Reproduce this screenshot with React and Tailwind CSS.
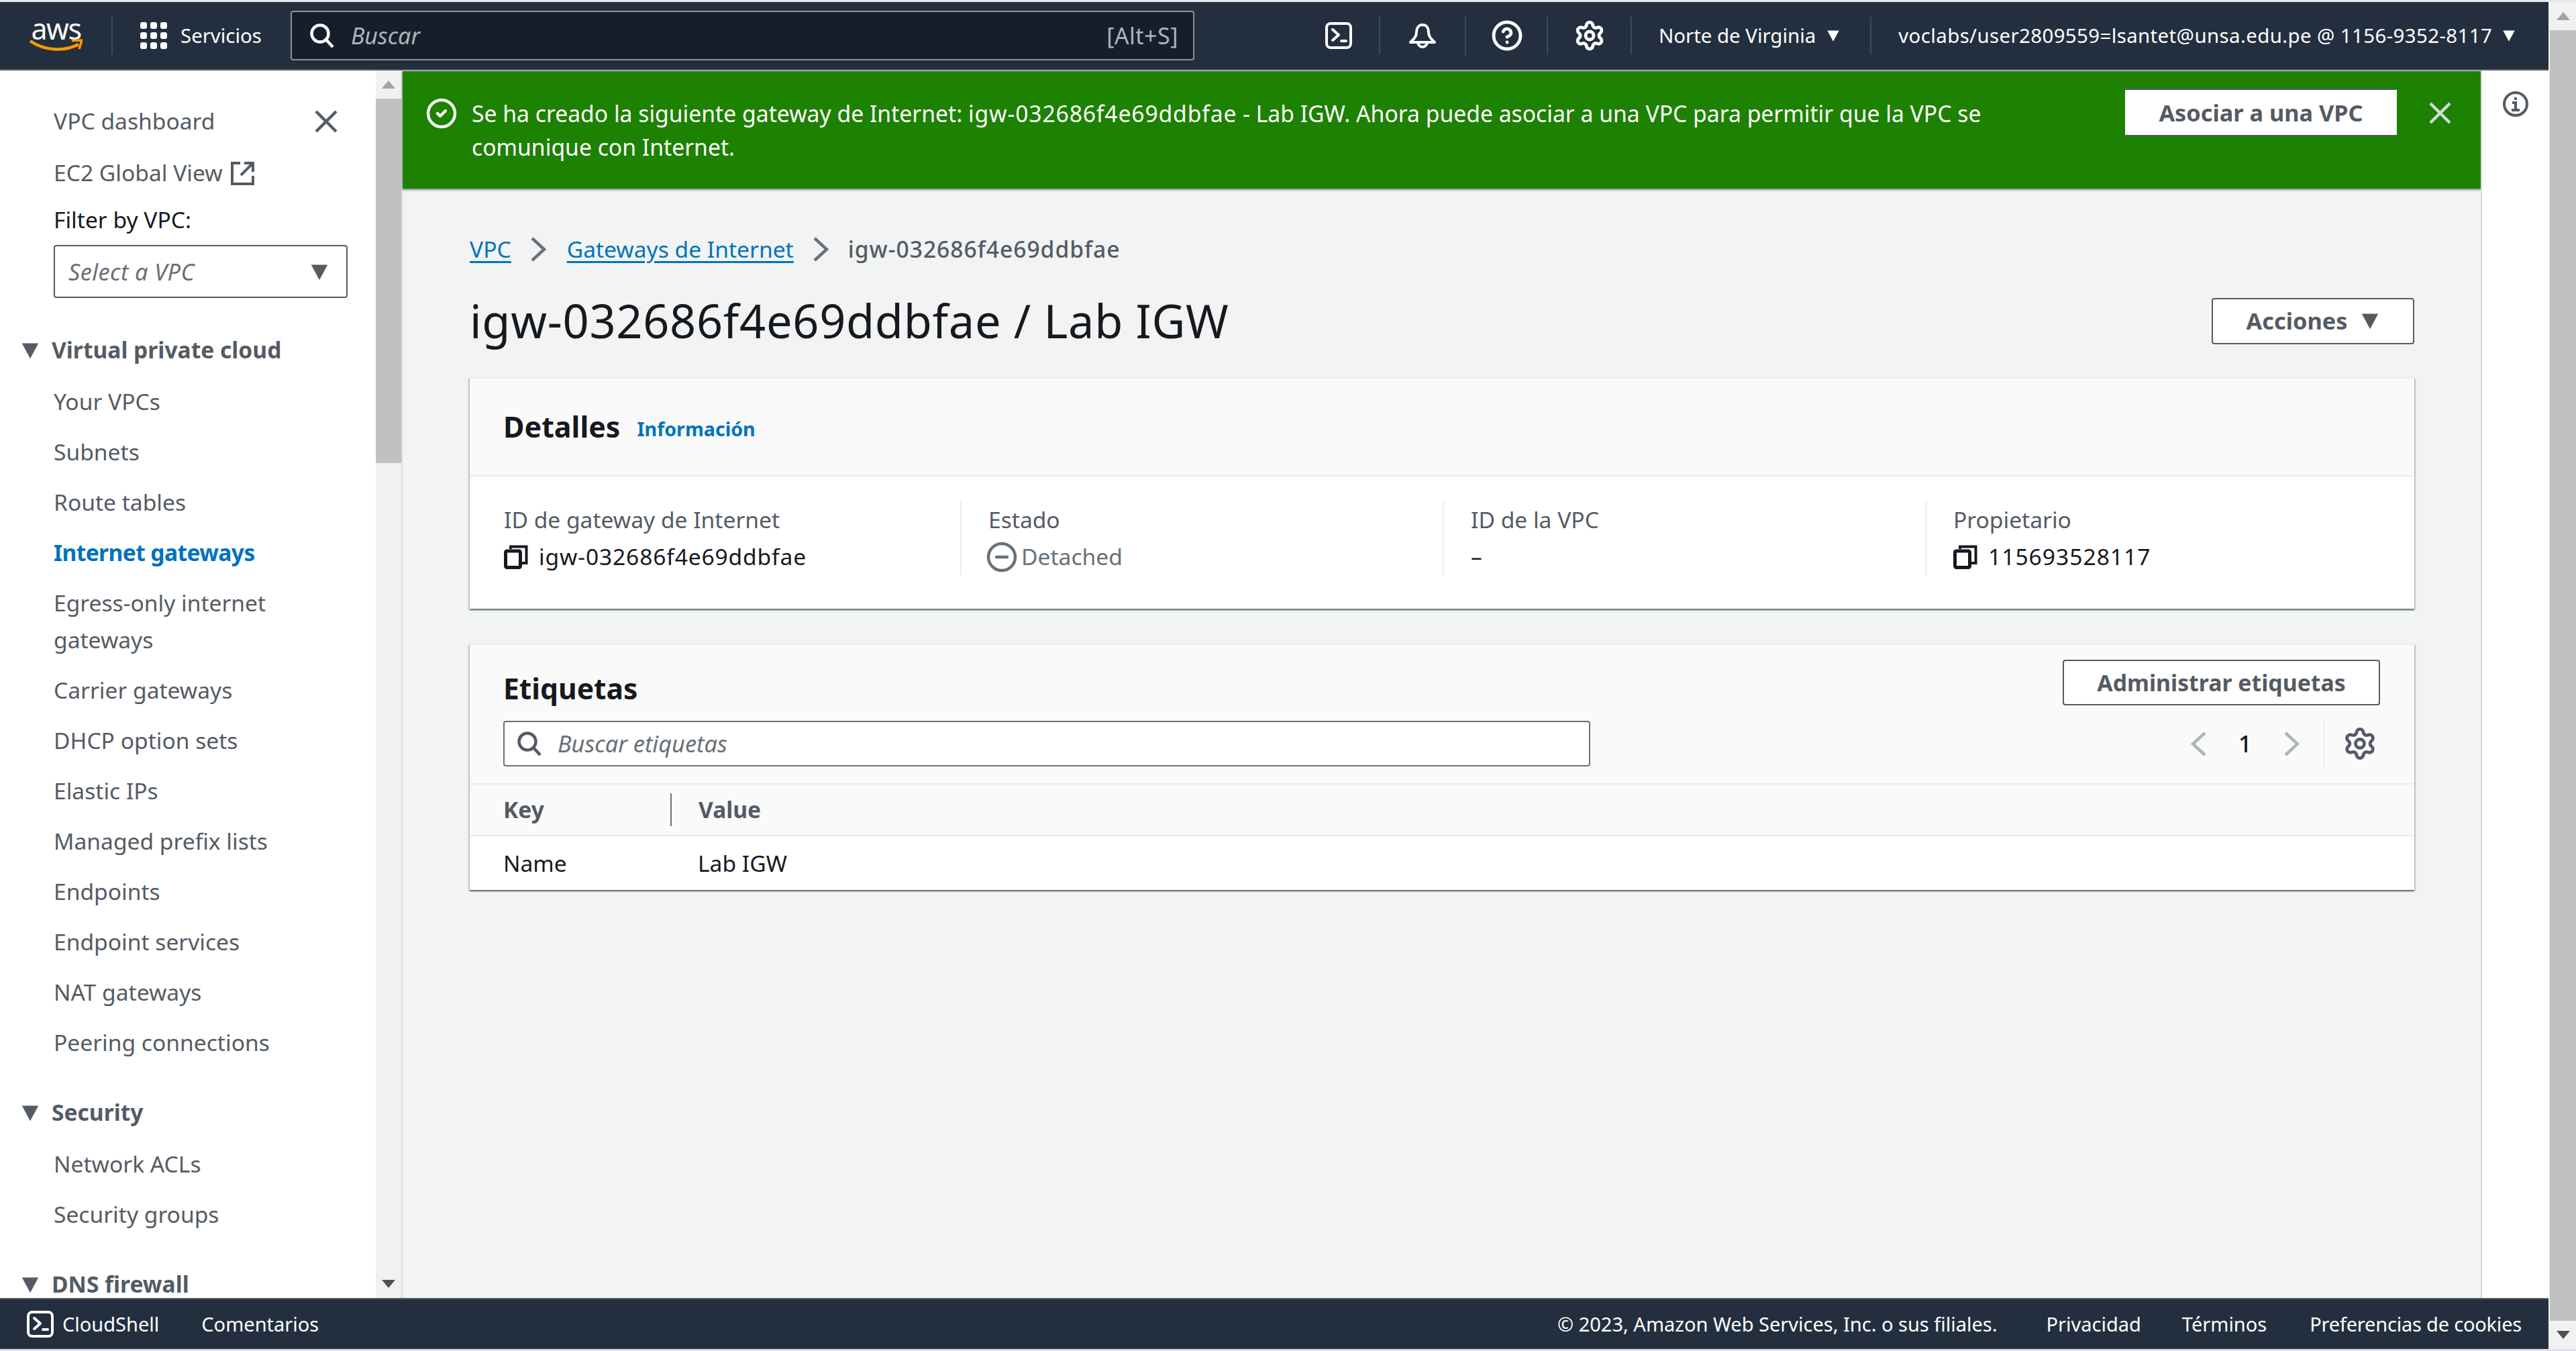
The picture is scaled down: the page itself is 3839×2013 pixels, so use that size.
import React from "react";
import { CircleHelp, Settings, CircleCheck, CircleMinus } from "lucide-react";

const navSections = [
  {
    title: "Virtual private cloud",
    items: [
      "Your VPCs",
      "Subnets",
      "Route tables",
      "Internet gateways",
      "Egress-only internet gateways",
      "Carrier gateways",
      "DHCP option sets",
      "Elastic IPs",
      "Managed prefix lists",
      "Endpoints",
      "Endpoint services",
      "NAT gateways",
      "Peering connections",
    ],
  },
  { title: "Security", items: ["Network ACLs", "Security groups"] },
  { title: "DNS firewall", items: [] },
];

function Caret({ className }) {
  return (
    <svg viewBox="0 0 16 16" className={className} fill="currentColor">
      <path d="M1 2h14L8 15z" />
    </svg>
  );
}

function CloseIcon({ className }) {
  return (
    <svg viewBox="0 0 34 34" className={className} fill="none" stroke="currentColor" strokeWidth="4.5">
      <path d="M2 2l30 30M32 2L2 32" />
    </svg>
  );
}

function SearchIcon({ className }) {
  return (
    <svg viewBox="0 0 38 38" className={className} fill="none" stroke="currentColor" strokeWidth="4.5">
      <circle cx="16" cy="16" r="12.5" />
      <path d="M25 25l10 11" />
    </svg>
  );
}

function Chevron({ className, left }) {
  return (
    <svg viewBox="0 0 23 37" className={className} fill="none" stroke="currentColor" strokeWidth="4.5">
      <path d={left ? "M21 2L3 18.5 21 35" : "M2 2l18 16.5L2 35"} />
    </svg>
  );
}

function ShellIcon({ className }) {
  return (
    <svg viewBox="0 0 40 40" className={className} fill="none" stroke="#fff" strokeWidth="4">
      <rect x="2" y="2" width="36" height="36" rx="6" />
      <path d="M11 11l9 8-9 8" strokeLinecap="round" strokeLinejoin="round" />
      <path d="M24 28h7" strokeLinecap="round" />
    </svg>
  );
}

function BellIcon({ className }) {
  return (
    <svg viewBox="0 0 40 40" className={className} fill="none" stroke="#fff" strokeWidth="4" strokeLinejoin="round">
      <path d="M20 4c-6 0-9 5-9 11 0 6-3 9-9 15h36c-6-6-9-9-9-15 0-6-3-11-9-11z" />
      <path d="M13 30a7 7 0 0 0 14 0" />
    </svg>
  );
}

function CopyIcon() {
  return (
    <svg viewBox="0 0 36 36" className="w-[36px] h-[36px] shrink-0" fill="none" stroke="#16191f">
      <path d="M10 6V2.5h23.5V27H27" strokeWidth="4" />
      <rect x="2.5" y="9" width="22" height="24.5" rx="2" strokeWidth="5" />
    </svg>
  );
}

function GridIcon() {
  return (
    <div className="grid grid-cols-3 gap-[4.5px] w-[40px] h-[40px]">
      {Array.from({ length: 9 }).map((_, i) => (
        <div key={i} className="bg-white rounded-[3px]" />
      ))}
    </div>
  );
}

function Divider({ className }) {
  return <div className={"w-[2px] bg-[#414a56] " + className} />;
}

function Header() {
  return (
    <header className="h-[102px] shrink-0 bg-[#232f3e] border-b-2 border-[#545b64] flex items-center text-white text-[29.4px]">
      <div className="ml-[44px] w-[79px] h-[50px] shrink-0 flex flex-col items-center">
        <span className="text-[43px] leading-[30px] tracking-[-1.5px]">aws</span>
        <svg viewBox="0 0 79 20" className="w-[79px] h-[20px]" fill="none">
          <path d="M1 3c20 14 50 17 72 5" stroke="#ff9900" strokeWidth="4.5" />
          <path d="M63 2.5l15-.5-4 13" stroke="#ff9900" strokeWidth="3.5" />
        </svg>
      </div>
      <Divider className="h-[56px] ml-[43px]" />
      <div className="ml-[41px]"><GridIcon /></div>
      <span className="ml-[20px]">Servicios</span>
      <div className="ml-[43px] w-[1347px] h-[74px] bg-[#161e2d] border-2 border-[#879596] rounded-[4px] flex items-center pl-[26px] pr-[22px] text-[#aab7b8] text-[34px]">
        <SearchIcon className="w-[38px] h-[38px] text-white" />
        <span className="ml-[24px] italic">Buscar</span>
        <span className="ml-auto tracking-[0.5px]">[Alt+S]</span>
      </div>
      <ShellIcon className="ml-[195px] w-[40px] h-[40px]" />
      <Divider className="h-[56px] ml-[40px]" />
      <BellIcon className="ml-[43px] w-[40px] h-[40px]" />
      <Divider className="h-[58px] ml-[43px]" />
      <CircleHelp className="ml-[37px] w-[48px] h-[48px]" strokeWidth={2.4} />
      <Divider className="h-[56px] ml-[35px]" />
      <Settings className="ml-[38px] w-[48px] h-[48px]" strokeWidth={2.4} />
      <Divider className="h-[56px] ml-[37px]" />
      <span className="ml-[40px]">Norte de Virginia</span>
      <Caret className="ml-[16px] w-[20px] h-[20px]" />
      <Divider className="h-[56px] ml-[45px]" />
      <span className="ml-[40px] whitespace-nowrap tracking-[0.4px]">voclabs/user2809559=lsantet@unsa.edu.pe @ 1156-9352-8117</span>
      <Caret className="ml-[15px] w-[20px] h-[20px]" />
    </header>
  );
}

function Sidebar() {
  return (
    <aside className="w-[600px] shrink-0 flex overflow-hidden bg-white border-r-2 border-[#d5dbdb] text-[33.6px] text-[#545b64]">
      <div className="w-[560px] shrink-0 pt-[38px]">
        <div className="pl-[80px] pr-[57px] h-[75px] flex items-center justify-between">
          <span>VPC dashboard</span>
          <CloseIcon className="w-[34px] h-[34px]" />
        </div>
        <div className="mt-[2px] pl-[80px] h-[75px] flex items-center gap-[12px]">
          <span>EC2 Global View</span>
          <svg viewBox="0 0 36 36" className="w-[36px] h-[36px]" fill="none" stroke="#545b64" strokeWidth="4">
            <path d="M14 3H2v31h31V22" />
            <path d="M20 3h13v13M33 3L15 21" />
          </svg>
        </div>
        <div className="pl-[80px] h-[64px] flex items-center text-[#16191f]">Filter by VPC:</div>
        <div className="ml-[80px] mt-[6px] w-[438px] h-[79px] border-2 border-[#545b64] rounded-[4px] flex items-center justify-between pl-[20px] pr-[26px] italic text-[34.3px] tracking-[0.4px] text-[#687078]">
          <span>Select a VPC</span>
          <Caret className="w-[28px] h-[28px] text-[#545b64]" />
        </div>
        {navSections.map((section, i) => (
          <div key={section.title} className={i === 0 ? "mt-[40px]" : "mt-[29px]"}>
            <div className="h-[75px] mb-[2px] pl-[31px] flex items-center font-bold">
              <Caret className="w-[28px] h-[28px] mr-[18px]" />
              {section.title}
            </div>
            <ul>
              {section.items.map((item) => (
                <li
                  key={item}
                  className={
                    "pl-[80px] pr-[60px] py-[10px] leading-[55px] " +
                    (item === "Internet gateways" ? "font-bold tracking-[-0.6px] text-[#0073bb]" : "")
                  }
                >
                  {item}
                </li>
              ))}
            </ul>
          </div>
        ))}
      </div>
      <div className="w-[38px] shrink-0 bg-[#f1f1f1] flex flex-col">
        <div className="h-[42px] shrink-0 flex items-center justify-center">
          <div className="w-0 h-0 border-x-[10px] border-x-transparent border-b-[12px] border-b-[#a3a3a3]" />
        </div>
        <div className="h-[543px] bg-[#c1c1c1]" />
        <div className="mt-auto h-[42px] flex items-center justify-center">
          <div className="w-0 h-0 border-x-[10px] border-x-transparent border-t-[12px] border-t-[#505050]" />
        </div>
      </div>
    </aside>
  );
}

function Banner() {
  return (
    <div className="mt-[1px] h-[175px] shrink-0 bg-[#1d8102] text-white flex items-start pl-[34px] shadow-[0_2px_3px_rgba(0,28,36,0.5)] text-[33.7px] leading-[50px]">
      <CircleCheck className="mt-[39px] w-[48px] h-[48px] shrink-0" strokeWidth={2.2} />
      <p className="ml-[21px] mt-[38px] w-[2400px]">
        Se ha creado la siguiente gateway de Internet: <span className="tracking-[0.85px]">igw-032686f4e69ddbfae</span> - Lab IGW. Ahora puede asociar a una VPC para permitir que la VPC se comunique con Internet.
      </p>
      <button className="ml-[64px] mt-[26px] w-[405px] h-[71px] shrink-0 bg-white text-[34.3px] text-[#545b64] font-bold border-b-2 border-t-2 border-[#545b64] rounded-[2px]">
        Asociar a una VPC
      </button>
      <CloseIcon className="ml-[48px] mt-[46px] w-[33px] h-[33px] shrink-0 text-[#d5dbdb]" />
    </div>
  );
}

function Card({ children }) {
  return (
    <section className="bg-white border-t-2 border-[#eaeded] shadow-[0_2px_2px_rgba(0,28,36,0.5),2px_2px_2px_rgba(0,28,36,0.15),-2px_2px_2px_rgba(0,28,36,0.15)]">
      {children}
    </section>
  );
}

function Details() {
  return (
    <Card>
      <div className="h-[146px] bg-[#fafafa] border-b-2 border-[#eaeded] flex items-center gap-[25px] pl-[50px]">
        <h2 className="text-[43px] font-bold text-[#16191f]">Detalles</h2>
        <a className="text-[28.6px] font-bold text-[#0073bb] mt-[6px]">Información</a>
      </div>
      <div className="pt-[37px] pb-[50px] pl-[51px] grid grid-cols-[680px_719px_719px_1fr] leading-[55px] text-[33.6px]">
        <div>
          <div className="text-[#545b64]">ID de gateway de Internet</div>
          <div className="flex items-center gap-[16px] text-[#16191f]">
            <CopyIcon />
            <span className="tracking-[0.85px]">igw-032686f4e69ddbfae</span>
          </div>
        </div>
        <div className="border-l-2 border-[#eaeded] pl-[40px]">
          <div className="text-[#545b64]">Estado</div>
          <div className="flex items-center gap-[5px] text-[#687078]">
            <CircleMinus className="-ml-[4px] w-[48px] h-[48px]" strokeWidth={2.2} />
            Detached
          </div>
        </div>
        <div className="border-l-2 border-[#eaeded] pl-[40px]">
          <div className="text-[#545b64]">ID de la VPC</div>
          <div className="text-[#16191f]">–</div>
        </div>
        <div className="border-l-2 border-[#eaeded] pl-[40px]">
          <div className="text-[#545b64]">Propietario</div>
          <div className="flex items-center gap-[16px] text-[#16191f]">
            <CopyIcon />
            <span className="tracking-[1px]">115693528117</span>
          </div>
        </div>
      </div>
    </Card>
  );
}

function Tags() {
  return (
    <Card>
      <div className="bg-[#fafafa] border-b-2 border-[#eaeded] pt-[22px] pb-[25px] pl-[50px] pr-[51px]">
        <div className="h-[68px] flex justify-between">
          <h2 className="text-[42.6px] font-bold text-[#16191f] leading-[68px] pt-[8px]">Etiquetas</h2>
          <button className="w-[473px] h-[68px] bg-white border-2 border-[#545b64] rounded-[4px] text-[33.8px] font-bold text-[#545b64]">
            Administrar etiquetas
          </button>
        </div>
        <div className="mt-[23px] h-[68px] flex items-center">
          <div className="w-[1620px] h-[68px] bg-white border-2 border-[#687078] rounded-[4px] flex items-center pl-[18px] text-[34.3px] italic text-[#687078]">
            <SearchIcon className="w-[38px] h-[38px] text-[#545b64]" />
            <span className="ml-[23px]">Buscar etiquetas</span>
          </div>
          <Chevron left className="ml-[895px] w-[23px] h-[37px] text-[#aab7b8]" />
          <span className="ml-[48px] w-[20px] text-[34.3px] font-medium text-[#16191f]">1</span>
          <Chevron className="ml-[48px] w-[23px] h-[37px] text-[#aab7b8]" />
          <div className="ml-[35px] w-[2px] h-[68px] bg-[#eaeded]" />
          <Settings className="ml-[27px] w-[52px] h-[52px] text-[#545b64]" strokeWidth={2.2} />
        </div>
      </div>
      <div className="h-[77px] bg-[#fafafa] border-b-2 border-[#eaeded] flex items-center text-[33.6px] font-bold text-[#545b64] pl-[50px]">
        <div className="w-[249px] shrink-0">Key</div>
        <div className="w-[2px] h-[49px] bg-[#687078]" />
        <div className="ml-[40px]">Value</div>
      </div>
      <div className="h-[80px] flex items-center text-[33.6px] text-[#16191f] pl-[50px]">
        <div className="w-[290px] shrink-0">Name</div>
        <div>Lab IGW</div>
      </div>
    </Card>
  );
}

function Content() {
  return (
    <main className="flex-1 min-w-0 bg-[#f2f3f3] flex flex-col">
      <Banner />
      <div className="pt-[65px] pl-[100px] pr-[99px]">
        <nav className="h-[50px] flex items-center text-[33.6px]">
          <a className="text-[#0073bb] underline decoration-[3px] underline-offset-[5px]">VPC</a>
          <Chevron className="ml-[29px] mr-[31px] w-[23px] h-[37px] text-[#687078]" />
          <a className="text-[#0073bb] underline decoration-[3px] underline-offset-[5px]">Gateways de Internet</a>
          <Chevron className="ml-[29px] mr-[29px] w-[23px] h-[37px] text-[#687078]" />
          <span className="font-medium tracking-[1px] text-[#545b64]">igw-032686f4e69ddbfae</span>
        </nav>
        <div className="mt-[47px] h-[70px] flex items-center justify-between">
          <h1 className="text-[68.5px] tracking-[0.7px] text-[#16191f]">igw-032686f4e69ddbfae / Lab IGW</h1>
          <button className="w-[302px] h-[69px] bg-white border-2 border-[#545b64] rounded-[4px] flex items-center justify-center gap-[20px] text-[34.3px] font-bold text-[#545b64]">
            Acciones
            <Caret className="w-[28px] h-[28px]" />
          </button>
        </div>
        <div className="mt-[49px] flex flex-col gap-[52px]">
          <Details />
          <Tags />
        </div>
      </div>
    </main>
  );
}

function Footer() {
  return (
    <footer className="h-[76px] shrink-0 bg-[#232f3e] border-t-2 border-[#545b64] flex items-center text-white text-[29px] pl-[40px] pr-[40px]">
      <ShellIcon className="w-[40px] h-[40px]" />
      <span className="ml-[13px]">CloudShell</span>
      <span className="ml-[63px]">Comentarios</span>
      <span className="ml-auto">© 2023, Amazon Web Services, Inc. o sus filiales.</span>
      <span className="ml-[73px]">Privacidad</span>
      <span className="ml-[61px]">Términos</span>
      <span className="ml-[64px] tracking-[-0.2px]">Preferencias de cookies</span>
    </footer>
  );
}

export default function App() {
  return (
    <div className="w-[3839px] h-[2013px] flex flex-col overflow-hidden bg-white font-['Noto_Sans',sans-serif]">
      <div className="h-[3px] shrink-0 bg-[#e8e8e8]" />
      <div className="flex-1 min-h-0 flex">
        <div className="w-[3798px] shrink-0 flex flex-col">
          <Header />
          <div className="flex-1 min-h-0 flex">
            <Sidebar />
            <Content />
            <div className="w-[101px] shrink-0 bg-white border-l-2 border-[#d5dbdb] flex justify-center pt-[30px]">
              <svg viewBox="0 0 40 40" className="w-[40px] h-[40px]" fill="none" stroke="#545b64" strokeWidth="4">
                <circle cx="20" cy="20" r="17" />
                <path d="M20 10v4M15 18h5v11M14 29h12" />
              </svg>
            </div>
          </div>
          <Footer />
        </div>
        <div className="flex-1 bg-[#f1f1f1] flex flex-col pl-[2px]">
          <div className="h-[42px] shrink-0 flex items-center justify-center">
            <div className="w-0 h-0 border-x-[10px] border-x-transparent border-b-[12px] border-b-[#a3a3a3]" />
          </div>
          <div className="flex-1 bg-[#c1c1c1]" />
          <div className="h-[42px] shrink-0 flex items-center justify-center">
            <div className="w-0 h-0 border-x-[10px] border-x-transparent border-t-[12px] border-t-[#505050]" />
          </div>
        </div>
      </div>
      <div className="h-[3px] shrink-0 bg-[#e0dcec]" />
    </div>
  );
}
